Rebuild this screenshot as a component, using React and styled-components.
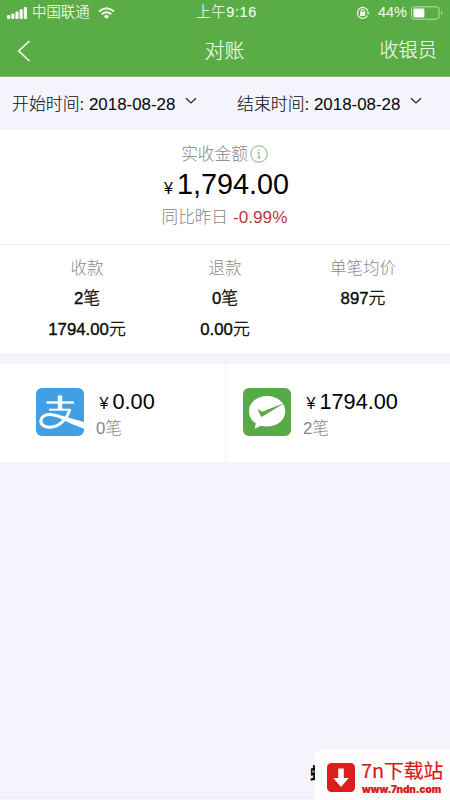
import React from "react";
import styled, { createGlobalStyle } from "styled-components";

const Global = createGlobalStyle`
  * { box-sizing: border-box; }
  body { margin: 0; background: #f4f4fc; }
`;

const Page = styled.div`
  position: relative;
  display: flex;
  flex-direction: column;
  width: 450px;
  height: 800px;
  overflow: hidden;
  background: #f4f4fc;
  color: #0c0c0c;
  font-family: "Liberation Sans", "Noto Sans CJK SC", sans-serif;
  font-weight: 300;
  white-space: nowrap;
`;

const Header = styled.header`
  height: 77px;
  background: #5aac47;
  color: #f3fbee;
  border-bottom: 1px solid #7fb873;
`;

const StatusBar = styled.div`
  display: grid;
  grid-template-columns: 1fr auto 1fr;
  align-items: center;
  height: 25px;
  padding: 0 7px;
  font-size: 14.5px;
  font-weight: 400;
  line-height: 25px;
`;

const StatusGroup = styled.div`
  display: flex;
  align-items: center;
  justify-content: ${(p) => (p.$end ? "flex-end" : "flex-start")};
  gap: ${(p) => p.$gap}px;
`;

const Carrier = styled.span`
  padding-right: 3px;
  font-size: 14.4px;
  font-weight: 300;
  -webkit-text-stroke: 0.15px currentColor;
`;

const Clock = styled.span`
  padding-left: 3px;
  font-weight: 300;
  letter-spacing: 0.55px;
  -webkit-text-stroke: 0.15px currentColor;
`;

const NavBar = styled.nav`
  display: grid;
  grid-template-columns: 1fr auto 1fr;
  align-items: center;
  height: 51px;
  padding: 0 13px 0 17px;
  font-size: 20px;
  line-height: 50px;
  -webkit-text-stroke: 0.15px currentColor;
`;

const NavTitle = styled.span`
  padding-right: 5px;
`;

const NavAction = styled.span`
  text-align: right;
  font-size: 19.2px;
`;

const Dates = styled.section`
  display: grid;
  grid-template-columns: 1fr 1fr;
  height: 53px;
`;

const DateField = styled.div`
  display: flex;
  align-items: flex-start;
  gap: 10px;
  padding: 15px 0 0 12px;
  font-size: 16.9px;
  line-height: 26px;
  -webkit-text-stroke: 0.08px currentColor;
  svg { margin-top: 5px; }
`;

const Summary = styled.section`
  display: flex;
  flex-direction: column;
  align-items: center;
  height: 115px;
  padding-top: 13px;
  background: #fff;
  border-bottom: 1px solid #f1f1f3;
`;

const SummaryLabel = styled.div`
  display: flex;
  align-items: center;
  gap: 2px;
  height: 24px;
  padding-right: 1px;
  color: #858585;
  font-size: 16.7px;
  line-height: 24px;
  svg { margin-bottom: 2px; }
`;

const Total = styled.div`
  display: flex;
  align-items: baseline;
  gap: 4px;
  height: 36px;
  padding-left: 3px;
  color: #000;
  font-size: 28.8px;
  line-height: 34px;
`;

const Yen = styled.span`
  width: ${(p) => p.$w}px;
  font-size: 16px;
  text-align: center;
`;

const Compare = styled.div`
  display: flex;
  gap: 5px;
  padding-right: 1px;
  color: #858585;
  font-size: 16.6px;
  line-height: 30px;
`;

const Drop = styled.span`
  margin-top: -1px;
  color: #b8383d;
  font-size: 17.2px;
`;

const Stats = styled.section`
  display: grid;
  grid-template-columns: repeat(3, 138px);
  justify-content: center;
  height: 108px;
  padding-top: 8px;
  background: #fff;
  text-align: center;
`;

const StatLabel = styled.div`
  color: #8a8a8a;
  font-size: 16.5px;
  line-height: 30px;
`;

const StatValue = styled.div`
  height: 31px;
  font-size: 16.8px;
  line-height: 31px;
  -webkit-text-stroke: 0.4px #0c0c0c;
`;

const Channels = styled.section`
  display: grid;
  grid-template-columns: 225px 225px;
  height: 98px;
  margin-top: 11px;
  background: #fff;
`;

const Channel = styled.div`
  display: flex;
  align-items: flex-start;
  gap: 12px;
  padding: 24px 0 0 ${(p) => p.$left}px;
  border-left: ${(p) => (p.$divided ? "1px solid #f0f0f4" : "0")};
`;

const ChannelAmount = styled.div`
  display: flex;
  align-items: baseline;
  gap: 3.5px;
  height: 29px;
  padding-left: 3px;
  color: #000;
  font-size: 21.7px;
  line-height: 28px;
`;

const ChannelCount = styled.div`
  color: #858585;
  font-size: 16.8px;
  line-height: 24px;
`;

const Footer = styled.footer`
  position: absolute;
  left: 0;
  right: 0;
  bottom: 0;
  height: 38px;
  padding-left: 310px;
  background: linear-gradient(#e9e9f0, #e9e9f0) 0 35px / 100% 1px no-repeat;
  color: #000;
  font-size: 17px;
  font-weight: 700;
  line-height: 26px;
`;

const Badge = styled.aside`
  position: absolute;
  right: 0;
  bottom: 0;
  display: flex;
  align-items: flex-start;
  gap: 6px;
  width: 135px;
  height: 50px;
  padding: 13px 0 0 12px;
  border-radius: 5px 0 0 0;
  background: #fffefc;
  color: #d7191b;
`;

const BadgeText = styled.div`
  display: flex;
  flex-direction: column;
  gap: 1px;
  margin-top: -5px;
`;

const BadgeName = styled.span`
  font: 400 19.8px/24px "Noto Sans CJK SC", sans-serif;
  -webkit-text-stroke: 0.2px #d7191b;
`;

const BadgeUrl = styled.span`
  padding-left: 1px;
  font: 900 10px/12px Inter, sans-serif;
  -webkit-text-stroke: 0.2px #d7191b;
`;

const Signal = () => (
  <svg width="20" height="12" viewBox="0 0 20 12" fill="currentColor">
    <rect x="0" y="8" width="3.2" height="4" rx="1" />
    <rect x="4.2" y="6.5" width="3.2" height="5.5" rx="1" />
    <rect x="8.4" y="4.5" width="3.2" height="7.5" rx="1" />
    <rect x="12.6" y="2.3" width="3.2" height="9.7" rx="1" />
    <rect x="16.8" y="0" width="3.2" height="12" rx="1" />
  </svg>
);

const Wifi = () => (
  <svg width="17" height="12" viewBox="0 0 17 12" fill="none" stroke="currentColor" strokeWidth="2">
    <path d="M1 4.6Q8.5-2 16 4.6" />
    <path d="M3.7 7.3Q8.5 3.2 13.3 7.3" />
    <path d="M8.5 12 5.8 9.2Q8.5 7 11.2 9.2Z" fill="currentColor" stroke="none" />
  </svg>
);

const RotationLock = () => (
  <svg width="14" height="14" viewBox="0 0 14 14" fill="none" stroke="currentColor" strokeWidth="1.2">
    <path d="M11.6 9.5A5.4 5.4 0 1 1 12 5.2" />
    <path d="M10.6 6.2h3l-1.5 2.3Z" fill="currentColor" stroke="none" />
    <rect x="4.2" y="6" width="5" height="4" fill="currentColor" stroke="none" />
    <path d="M5.2 6.2V5a1.5 1.5 0 0 1 3 0v1.2" />
  </svg>
);

const Battery = () => (
  <svg width="32" height="14" viewBox="0 0 32 14">
    <rect x="0.5" y="0.8" width="27.5" height="12.4" rx="2.4" fill="none" stroke="#b7dcae" />
    <rect x="2.4" y="2.6" width="11" height="8.8" rx="0.8" fill="#fff" />
    <path d="M30 5v4q1.3-.5 1.3-2T30 5" fill="#b7dcae" />
  </svg>
);

const Back = () => (
  <svg width="14" height="22" viewBox="0 0 14 22" fill="none" stroke="currentColor" strokeWidth="1.7">
    <path d="M12.4 1 1.8 11l10.6 10" />
  </svg>
);

const Caret = () => (
  <svg width="12" height="8" viewBox="0 0 12 8" fill="none" stroke="#222" strokeWidth="1.2">
    <path d="m1 1.2 5 4.8 5-4.8" />
  </svg>
);

const Info = () => (
  <svg width="18" height="18" viewBox="0 0 18 18" fill="none" stroke="#7aa775" strokeWidth="0.9">
    <circle cx="9" cy="9" r="8.2" />
    <path d="M7.5 7.6H9v5M7.2 12.8h3.6" />
    <circle cx="8.8" cy="5.2" r="0.8" fill="#7aa775" stroke="none" />
  </svg>
);

const Alipay = () => (
  <svg width="48" height="48" viewBox="0 0 48 48">
    <rect width="48" height="48" rx="6" fill="#429fe4" />
    <g fill="none" stroke="#fff">
      <path d="M10.5 14.5H38" strokeWidth="2.4" />
      <path d="M24 7.5V22" strokeWidth="4.4" />
      <path d="M13 21.7H34" strokeWidth="2" />
      <path d="M33.8 21C31.5 31 23 39.5 13.5 39.2C6 39 3.5 34.5 5.5 30.5C9 24.5 19 26.2 27 30" strokeWidth="3" />
    </g>
    <path d="M25 27.5 48 34V40.8Q36 36.5 25 31Z" fill="#fff" />
  </svg>
);

const WeChatPay = () => (
  <svg width="48" height="48" viewBox="0 0 48 48">
    <rect width="48" height="48" rx="6" fill="#58aa46" />
    <path d="M24 8C13.5 8 6 14.8 6 23.3C6 28.5 8.6 32.6 12.8 35.3L11.8 40.8 18 37.8C20 38.3 21.7 38.5 24 38.5C34.5 38.5 42.3 31.8 42.3 23.3S34.5 8 24 8Z" fill="#fff" />
    <path d="M14.5 20.5 19 23.7 41.5 15 19.5 28.5Q18 29 17.4 27.6Z" fill="#58aa46" />
  </svg>
);

const DownloadMark = () => (
  <svg width="28" height="29" viewBox="0 0 28 29">
    <rect width="28" height="29" rx="4.5" fill="#dc1f1c" />
    <path d="M11.2 5.5h5.6v9.5h5L14 24 6.2 15h5Z" fill="#fff" />
  </svg>
);

const stats = [
  { label: "收款", values: ["2笔", "1794.00元"] },
  { label: "退款", values: ["0笔", "0.00元"] },
  { label: "单笔均价", values: ["897元"] },
];

export default function App() {
  return (
    <Page>
      <Global />
      <Header>
        <StatusBar>
          <StatusGroup $gap={5}>
            <Signal />
            <Carrier>中国联通</Carrier>
            <Wifi />
          </StatusGroup>
          <Clock>上午9:16</Clock>
          <StatusGroup $end $gap={4}>
            <RotationLock />
            <span>&nbsp;44%</span>
            <Battery />
          </StatusGroup>
        </StatusBar>
        <NavBar>
          <Back />
          <NavTitle>对账</NavTitle>
          <NavAction>收银员</NavAction>
        </NavBar>
      </Header>
      <Dates>
        <DateField>开始时间: 2018-08-28 <Caret /></DateField>
        <DateField>结束时间: 2018-08-28 <Caret /></DateField>
      </Dates>
      <Summary>
        <SummaryLabel>实收金额 <Info /></SummaryLabel>
        <Total><Yen $w={9}>¥</Yen>1,794.00</Total>
        <Compare>同比昨日 <Drop>-0.99%</Drop></Compare>
      </Summary>
      <Stats>
        {stats.map((s) => (
          <div key={s.label}>
            <StatLabel>{s.label}</StatLabel>
            {s.values.map((v) => <StatValue key={v}>{v}</StatValue>)}
          </div>
        ))}
      </Stats>
      <Channels>
        <Channel $left={36}>
          <Alipay />
          <div>
            <ChannelAmount><Yen $w={10}>¥</Yen>0.00</ChannelAmount>
            <ChannelCount>0笔</ChannelCount>
          </div>
        </Channel>
        <Channel $left={17} $divided>
          <WeChatPay />
          <div>
            <ChannelAmount><Yen $w={10}>¥</Yen>1794.00</ChannelAmount>
            <ChannelCount>2笔</ChannelCount>
          </div>
        </Channel>
      </Channels>
      <Footer>蚂</Footer>
      <Badge>
        <DownloadMark />
        <BadgeText>
          <BadgeName>7n下载站</BadgeName>
          <BadgeUrl>www.7ndn.com</BadgeUrl>
        </BadgeText>
      </Badge>
    </Page>
  );
}
